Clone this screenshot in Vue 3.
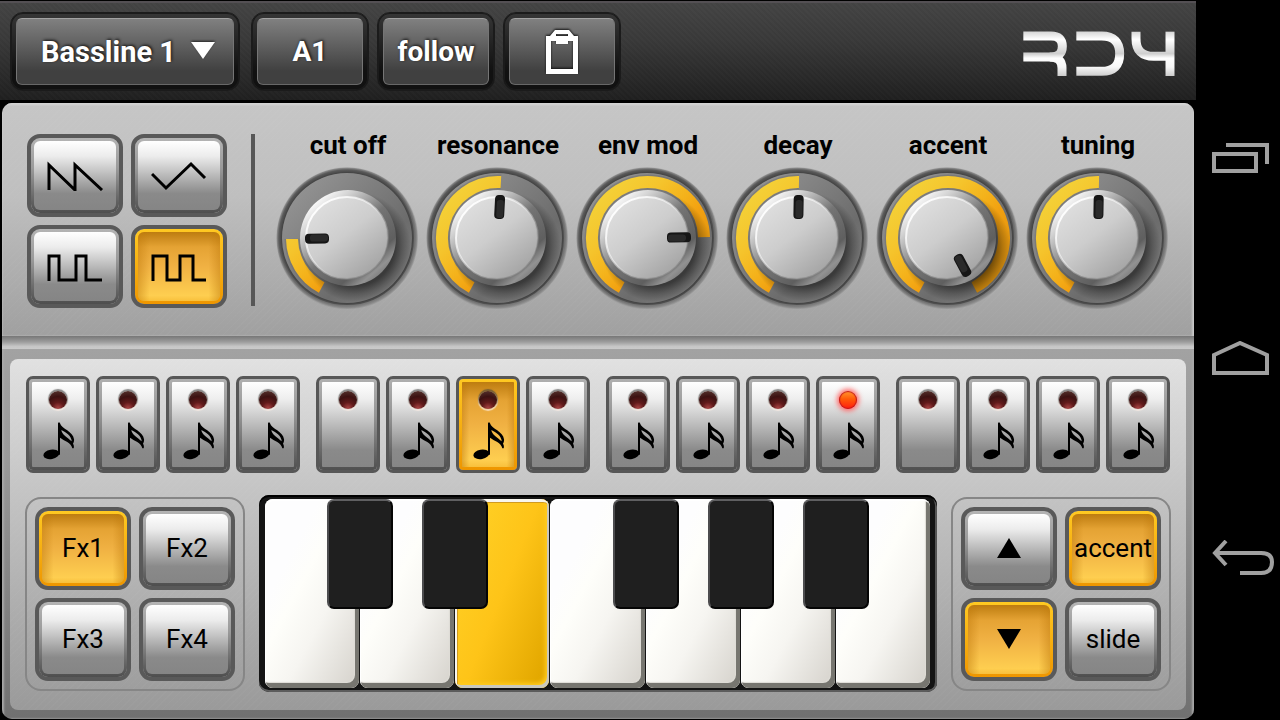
<script setup>
import { ref } from 'vue'

const tracks = ['Bassline 1', 'Bassline 2', 'Drums']
const track = ref('Bassline 1')

const waves = [
  { id: 'saw', label: 'Saw wave', path: 'M2 29 V4 L28 29 V4 L55 29' },
  { id: 'triangle', label: 'Triangle wave', path: 'M1 13 L15 27 L40 3 L54 17' },
  { id: 'pulse', label: 'Pulse wave', path: 'M2 29 V4 H12 V28 H29 V4 H39 V28 H55' },
  { id: 'square', label: 'Square wave', path: 'M2 29 V4 H16 V28 H29 V4 H42 V28 H55' }
]
const wave = ref('square')

const knobs = ref([
  { id: 'cutoff', label: 'cut off', angle: -91 },
  { id: 'resonance', label: 'resonance', angle: 3 },
  { id: 'envmod', label: 'env mod', angle: 89 },
  { id: 'decay', label: 'decay', angle: 1 },
  { id: 'accent', label: 'accent', angle: 152 },
  { id: 'tuning', label: 'tuning', angle: 1 }
])

const START = -152
const RADIUS = 56
function point(deg) {
  const a = (deg * Math.PI) / 180
  return `${(RADIUS * Math.sin(a)).toFixed(2)} ${(-RADIUS * Math.cos(a)).toFixed(2)}`
}
function arc(angle) {
  const large = angle - START > 180 ? 1 : 0
  return `M${point(START)} A${RADIUS} ${RADIUS} 0 ${large} 1 ${point(angle)}`
}

const current = ref(6)
const playing = 11
const rests = [4, 12]
const groups = [0, 1, 2, 3].map((g) =>
  [0, 1, 2, 3].map((s) => ({ index: g * 4 + s, note: !rests.includes(g * 4 + s) }))
)

const effects = ['Fx1', 'Fx2', 'Fx3', 'Fx4']
const effect = ref('Fx1')

const whiteKeys = ['C', 'D', 'E', 'F', 'G', 'A', 'B']
const blackKeys = [
  { name: 'C sharp', at: 1 },
  { name: 'D sharp', at: 2 },
  { name: 'F sharp', at: 4 },
  { name: 'G sharp', at: 5 },
  { name: 'A sharp', at: 6 }
]
const key = ref('E')

const up = ref(false)
const down = ref(true)
const accented = ref(true)
const slide = ref(false)
</script>

<template>
  <div class="screen">
    <div class="synth">
      <header class="topbar">
        <div class="slot slot-wide">
          <select v-model="track" class="tool" aria-label="Track">
            <option v-for="t in tracks" :key="t">{{ t }}</option>
          </select>
          <svg class="caret" width="24" height="17" viewBox="0 0 24 17" aria-hidden="true">
            <path d="M0 0 H24 L12 17 Z" fill="#fff" />
          </svg>
        </div>
        <div class="slot"><button class="tool" type="button">A1</button></div>
        <div class="slot"><button class="tool" type="button">follow</button></div>
        <div class="slot">
          <button class="tool" type="button" aria-label="Clipboard">
            <svg class="clip" width="34" height="46" viewBox="0 0 34 46" aria-hidden="true">
              <path fill="#fff" fill-rule="evenodd" d="M1 7 H5 L10 1 H24 L29 7 H33 V45 H1 Z M6 12 V40 H28 V12 H23 V15 H11 V12 Z M11 5 V7 H23 V5 Z" />
            </svg>
          </button>
        </div>
        <svg class="logo" width="152" height="46" viewBox="68 91 456 138" role="img" aria-label="RD4">
          <defs>
            <linearGradient id="chrome" gradientUnits="userSpaceOnUse" x1="0" y1="92" x2="0" y2="226">
              <stop offset="0" stop-color="#d4d4d4" />
              <stop offset="0.18" stop-color="#ffffff" />
              <stop offset="0.5" stop-color="#cfcfcf" />
              <stop offset="0.6" stop-color="#ffffff" />
              <stop offset="0.8" stop-color="#f6f6f6" />
              <stop offset="1" stop-color="#cccccc" />
            </linearGradient>
          </defs>
          <g fill="none" stroke="url(#chrome)" stroke-width="27">
            <path d="M69 106 H152 Q186 106 186 137 Q186 169 152 169 H69" />
            <path d="M148 169 Q185 169 185 202 V226" />
            <path d="M228 106 H304 Q358 106 358 159 Q358 212 304 212 H228" />
            <path d="M407 93 V114 Q407 167 460 167 H500" />
            <path d="M509 93 V226" />
          </g>
        </svg>
      </header>

      <main class="body">
        <section class="controls">
          <div class="pads waves">
            <button v-for="w in waves" :key="w.id" type="button" class="pad" :class="{ on: wave === w.id }" :aria-label="w.label" :aria-pressed="wave === w.id" @click="wave = w.id">
              <svg width="57" height="30" viewBox="0 0 57 30" aria-hidden="true">
                <path :d="w.path" fill="none" stroke="#000" stroke-width="3" />
              </svg>
            </button>
          </div>
          <div class="divider"></div>
          <div class="knobs">
            <div v-for="k in knobs" :key="k.id" class="knob">
              <label :for="k.id">{{ k.label }}</label>
              <div class="dial">
                <svg width="146" height="146" viewBox="-73 -73 146 146" aria-hidden="true">
                  <defs>
                    <radialGradient id="rim">
                      <stop offset="0.87" stop-color="#555" />
                      <stop offset="0.92" stop-color="#444" />
                      <stop offset="0.96" stop-color="#5b5b5b" />
                      <stop offset="0.985" stop-color="#888" />
                      <stop offset="1" stop-color="#aaa" stop-opacity="0.3" />
                    </radialGradient>
                    <linearGradient id="rimlight" x1="0" y1="0" x2="0.6" y2="1">
                      <stop offset="0.4" stop-color="#999" stop-opacity="0" />
                      <stop offset="1" stop-color="#909090" stop-opacity="0.6" />
                    </linearGradient>
                    <linearGradient id="base" x1="0.1" y1="0.1" x2="0.9" y2="0.9">
                      <stop offset="0" stop-color="#949494" />
                      <stop offset="0.7" stop-color="#6c6c6c" />
                      <stop offset="1" stop-color="#7c7c7c" />
                    </linearGradient>
                    <linearGradient id="amber" gradientUnits="userSpaceOnUse" x1="-42" y1="-42" x2="42" y2="42">
                      <stop offset="0" stop-color="#f4cf36" />
                      <stop offset="0.25" stop-color="#f5c42c" />
                      <stop offset="0.48" stop-color="#f4b11a" />
                      <stop offset="0.64" stop-color="#f2a010" />
                      <stop offset="1" stop-color="#dc9210" />
                    </linearGradient>
                    <radialGradient id="cast">
                      <stop offset="0.7" stop-color="#000" stop-opacity="0.5" />
                      <stop offset="0.85" stop-color="#000" stop-opacity="0.22" />
                      <stop offset="1" stop-color="#000" stop-opacity="0" />
                    </radialGradient>
                    <linearGradient id="bevel" x1="0.15" y1="0.1" x2="0.85" y2="0.9">
                      <stop offset="0" stop-color="#fff" />
                      <stop offset="0.18" stop-color="#d2d2d2" />
                      <stop offset="0.5" stop-color="#747474" />
                      <stop offset="0.8" stop-color="#5f5f5f" />
                      <stop offset="0.92" stop-color="#929292" />
                      <stop offset="1" stop-color="#7a7a7a" />
                    </linearGradient>
                    <linearGradient id="cap" x1="0.15" y1="0.1" x2="0.8" y2="0.95">
                      <stop offset="0" stop-color="#dedede" />
                      <stop offset="0.45" stop-color="#cdcdcd" />
                      <stop offset="1" stop-color="#a3a3a3" />
                    </linearGradient>
                    <linearGradient id="edge" x1="0.1" y1="0.1" x2="0.8" y2="0.8">
                      <stop offset="0" stop-color="#fff" />
                      <stop offset="0.5" stop-color="#fff" stop-opacity="0.5" />
                      <stop offset="1" stop-color="#777" stop-opacity="0.5" />
                    </linearGradient>
                  </defs>
                  <circle cx="-1" r="71" fill="url(#rim)" />
                  <circle cx="-1" r="69" fill="none" stroke="url(#rimlight)" stroke-width="4" />
                  <circle cx="-1" r="65" fill="url(#base)" />
                  <path :d="arc(k.angle)" fill="none" stroke="#6d6d6d" stroke-opacity="0.5" stroke-width="15" />
                  <path :d="arc(k.angle)" fill="none" stroke="url(#amber)" stroke-width="12" />
                  <circle cx="8" cy="9" r="55" fill="url(#cast)" />
                  <circle r="48" fill="url(#bevel)" />
                  <circle cx="-1" r="41" fill="url(#cap)" stroke="url(#edge)" stroke-width="2" />
                  <g :transform="`rotate(${k.angle})`">
                    <rect x="-5" y="-43" width="10" height="24" rx="4" fill="#161616" />
                    <rect x="-3" y="-38" width="7" height="18" rx="3" fill="#2a2a2a" />
                  </g>
                </svg>
                <input :id="k.id" v-model.number="k.angle" type="range" min="-151" max="152" />
              </div>
            </div>
          </div>
        </section>

        <div class="groove"></div>

        <section class="frame">
          <div class="sequencer">
            <div class="steps">
              <div v-for="(group, g) in groups" :key="g" class="group">
                <button v-for="s in group" :key="s.index" type="button" class="step" :class="{ on: current === s.index }" :aria-label="`Step ${s.index + 1}`" @click="current = s.index">
                  <span class="led" :class="{ lit: playing === s.index }"></span>
                  <svg v-if="s.note" class="note" width="32" height="38" viewBox="-1 0 96 114" aria-hidden="true">
                    <ellipse cx="24" cy="97" rx="24" ry="14" transform="rotate(-10 24 97)" />
                    <path d="M44 4 Q47 -2 50 4 C54 20 90 29 92 52 Q93 58 89 65 Q93 70 91 79 L87 79 C84 62 62 56 50 47 V98 H44 Z M54 24 C56 39 72 46 85 58 C85 42 68 31 54 24 Z" fill-rule="evenodd" />
                  </svg>
                </button>
              </div>
            </div>

            <div class="play">
              <div class="box pads">
                <button v-for="f in effects" :key="f" type="button" class="pad" :class="{ on: effect === f }" @click="effect = f">{{ f }}</button>
              </div>

              <div class="keyboard">
                <div class="keys">
                  <button v-for="n in whiteKeys" :key="n" type="button" class="white" :class="{ held: key === n }" :aria-label="n" @click="key = n"></button>
                  <button v-for="b in blackKeys" :key="b.name" type="button" class="black" :style="{ left: `${(b.at * 100) / 7}%` }" :aria-label="b.name" @click="key = b.name"></button>
                </div>
              </div>

              <div class="box pads">
                <button type="button" class="pad" :class="{ on: up }" aria-label="Octave up" @click="up = !up">
                  <svg width="24" height="20" viewBox="0 0 24 20" aria-hidden="true"><path d="M12 0 L24 20 H0 Z" /></svg>
                </button>
                <button type="button" class="pad" :class="{ on: accented }" @click="accented = !accented">accent</button>
                <button type="button" class="pad" :class="{ on: down }" aria-label="Octave down" @click="down = !down">
                  <svg width="24" height="20" viewBox="0 0 24 20" aria-hidden="true"><path d="M0 0 H24 L12 20 Z" /></svg>
                </button>
                <button type="button" class="pad" :class="{ on: slide }" @click="slide = !slide">slide</button>
              </div>
            </div>
          </div>
        </section>
      </main>
    </div>

    <nav class="system" aria-label="System">
      <button type="button" aria-label="Recent apps">
        <svg width="57" height="31" viewBox="0 0 57 31" aria-hidden="true">
          <path d="M2 11 H44 V28 H2 Z M14 2 H55 V21" />
        </svg>
      </button>
      <button type="button" aria-label="Home">
        <svg width="57" height="34" viewBox="0 0 57 34" aria-hidden="true">
          <path d="M2 14 L28 2 L55 14 V32 H2 Z" />
        </svg>
      </button>
      <button type="button" aria-label="Back">
        <svg width="63" height="36" viewBox="0 0 63 36" aria-hidden="true">
          <path d="M28 33 H49 Q60 33 60 22 Q60 13 49 13 H4" />
          <path d="M14 1 L3 13 L14 25" />
        </svg>
      </button>
    </nav>
  </div>
</template>

<style>
body {
  background: #000;
}
</style>

<style scoped>
* {
  box-sizing: border-box;
}
.screen {
  display: flex;
  min-height: 100vh;
  background: #000;
  color: #000;
  font-family: Roboto, 'Liberation Sans', sans-serif;
}
button,
select {
  margin: 0;
  font-family: inherit;
  color: inherit;
  cursor: pointer;
}
svg {
  display: block;
  flex: none;
}
.synth {
  flex: 1;
  min-width: 0;
  display: flex;
  flex-direction: column;
  padding: 1px 0;
  gap: 3px;
}

/* Top bar */
.topbar {
  display: flex;
  align-items: center;
  gap: 8px;
  height: 99px;
  padding: 0 21px 0 10px;
  border-top: 2px solid #545054;
  background:
    repeating-linear-gradient(45deg, rgba(255, 255, 255, 0.015) 0 2px, transparent 2px 4px),
    linear-gradient(#434343, #383838 40%, #1f1f1f);
}
.slot {
  position: relative;
  width: 118px;
  height: 79px;
  padding: 5px;
  border: 1px solid #1b1b1b;
  border-radius: 13px;
  background: linear-gradient(#363636, #111 75%);
  box-shadow: inset 0 0 0 1px #1b1b1b;
}
.slot-wide {
  width: 230px;
  margin-right: 3px;
}
.tool {
  display: flex;
  align-items: center;
  justify-content: center;
  width: 100%;
  height: 100%;
  padding: 0;
  border: 1px solid #757575;
  border-top-color: #a2a2a2;
  border-bottom-color: #686868;
  border-radius: 6px;
  background: linear-gradient(#808080, #404040 80%);
  color: #fff;
  font-size: 28px;
  font-weight: 700;
  text-shadow: 1px -1px 3px #111;
}
select.tool {
  appearance: none;
  padding-left: 24px;
  font-size: 29px;
}
.tool option {
  color: #000;
}
.caret {
  position: absolute;
  right: 24px;
  top: 29px;
  pointer-events: none;
  filter: drop-shadow(0 -1px 1px #222);
}
.clip {
  filter: drop-shadow(0 -1px 1px #111);
}
.logo {
  margin-left: auto;
  margin-top: 4px;
}

/* Metal body */
.body {
  flex: 1;
  display: flex;
  flex-direction: column;
  margin: 0 2px;
  overflow: hidden;
  border-radius: 10px;
}
.controls {
  display: flex;
  align-items: flex-start;
  padding: 26px 21px 25px 25px;
  background:
    repeating-linear-gradient(135deg, rgba(255, 255, 255, 0.02) 0 1px, transparent 1px 5px),
    linear-gradient(#c6c6c6, #bfbfbf 40%, #a0a0a0);
  box-shadow: inset 0 2px 2px #d4d4d4, inset -2px 0 2px #c4c4c4;
}
.pads {
  display: grid;
  grid-template-columns: 96px 96px;
  grid-auto-rows: 83px;
  gap: 8px;
}
.waves {
  margin-top: 5px;
}
.pad {
  display: flex;
  align-items: center;
  justify-content: center;
  padding: 3px;
  border: 4px solid #595959;
  border-radius: 13px;
  background:
    linear-gradient(#fff, #ececec 22%, #8a8a8a 76%, #858585) content-box,
    linear-gradient(#b4b4b4, #9a9a9a 40%, #4e4e4e) padding-box;
  font-size: 26px;
  line-height: 32px;
  white-space: nowrap;
}
.pad.on,
.step.on {
  background:
    linear-gradient(90deg, rgba(190, 120, 10, 0.45), transparent 14% 86%, rgba(190, 120, 10, 0.45)) content-box,
    linear-gradient(#bd7c10, #e5a334 22%, #f0b143 50%, #fece50 92%, #f8c03c) content-box,
    linear-gradient(#ffc922, #ee9600) padding-box;
}
.divider {
  width: 4px;
  height: 172px;
  margin: 5px 18px 0 24px;
  background: #575757;
}
.knobs {
  flex: 1;
  display: grid;
  grid-template-columns: repeat(6, 1fr);
}
.knob {
  display: flex;
  flex-direction: column;
  align-items: center;
  gap: 4px;
}
.knob label {
  font-size: 26px;
  font-weight: 700;
  line-height: 32px;
  white-space: nowrap;
}
.dial {
  position: relative;
}
.dial input {
  position: absolute;
  inset: 0;
  width: 100%;
  height: 100%;
  margin: 0;
  opacity: 0;
  cursor: pointer;
}
.groove {
  height: 13px;
  background: linear-gradient(#777, #9c9c9c 45%, #c6c6c6 80%, #cacaca);
}

/* Sequencer */
.frame {
  flex: 1;
  display: flex;
  padding: 10px 8px 9px;
  background: linear-gradient(#a2a2a2, #999 30%, #707070);
  box-shadow: inset 2px 0 2px #a8a8a8, inset -2px 0 2px #a8a8a8;
}
.sequencer {
  flex: 1;
  min-width: 0;
  padding: 17px 15px 18px;
  border-radius: 8px;
  background:
    repeating-linear-gradient(135deg, rgba(255, 255, 255, 0.02) 0 1px, transparent 1px 5px),
    linear-gradient(#e1e1e1, #c6c6c6 35%, #9a9a9a);
}
.steps {
  display: grid;
  grid-template-columns: repeat(4, 1fr);
  gap: 16px;
  padding: 0 1px;
}
.group {
  display: grid;
  grid-template-columns: repeat(4, 1fr);
  gap: 6px;
}
.step {
  display: flex;
  flex-direction: column;
  align-items: center;
  gap: 13px;
  height: 97px;
  padding: 3px;
  border: 3px solid #575757;
  border-radius: 7px;
  background:
    linear-gradient(#fff, #eee 20%, #8a8a8a 80%, #868686) content-box,
    linear-gradient(#b0b0b0, #949494 40%, #505050) padding-box;
}
.led {
  width: 18px;
  height: 18px;
  margin-top: 9px;
  border-radius: 50%;
  background: radial-gradient(circle at 50% 95%, #a44 0, #611a1a 30%, #3c1212 60%, #5a3a34);
  box-shadow: 0 -1px 1px 1px rgba(60, 60, 60, 0.6), 0 1px 1px 1px rgba(255, 240, 230, 0.7);
}
.led.lit {
  background: linear-gradient(#ff9a30, #ff5a08 45%, #ff1c10);
  box-shadow: inset 0 0 1px 1px #c0141c, 0 0 5px 2px #ff6a6a;
}
.note {
  margin-left: 2px;
}
.play {
  display: grid;
  grid-template-columns: auto 1fr auto;
  align-items: center;
  gap: 14px;
  margin-top: 22px;
}
.box {
  padding: 8px;
  border: 2px solid #868686;
  border-radius: 16px;
}
.keyboard {
  padding: 4px 6px;
  height: 197px;
  border-radius: 10px;
  background: #141414;
  box-shadow: inset 0 2px 0 #000, inset 0 -2px 0 #5c5c5c, inset -2px 0 0 #555;
}
.keys {
  position: relative;
  display: grid;
  grid-template-columns: repeat(7, 1fr);
  height: 189px;
}
.white {
  margin: 0 1px 0 0;
  padding: 0;
  border: 0;
  border-radius: 8px;
  background: linear-gradient(118deg, #fdfdfe 28%, #fefefa 42%, #f6f5f1 62%, #d9d6d0 94%);
  box-shadow: inset 1px 2px 0 #fff, inset -4px -5px 0 #777670, inset -5px -6px 1px #dedcd6;
}
.white.held {
  background: linear-gradient(112deg, #ffd42a, #fec418 50%, #e3a800 92%);
  box-shadow: inset 2px 3px 0 #f8f6ee, inset -2px -3px 0 #c9c8be, inset 3px 4px 0 #d09a20, inset -4px -5px 4px #ffcc20;
}
.black {
  position: absolute;
  top: 0;
  width: 66px;
  height: 110px;
  padding: 0;
  transform: translateX(-50%);
  border: 2px solid #050505;
  border-top-color: #606062;
  border-left-color: #4c4c4e;
  border-radius: 7px;
  background: #1f1f1f;
}

/* System navigation */
.system {
  width: 84px;
  display: flex;
  flex-direction: column;
  padding: 58px 0 62px;
}
.system button {
  flex: 1;
  display: flex;
  align-items: center;
  padding: 0 0 0 16px;
  border: 0;
  background: none;
}
.system path {
  fill: none;
  stroke: #a0a0a0;
  stroke-width: 4;
}
</style>
